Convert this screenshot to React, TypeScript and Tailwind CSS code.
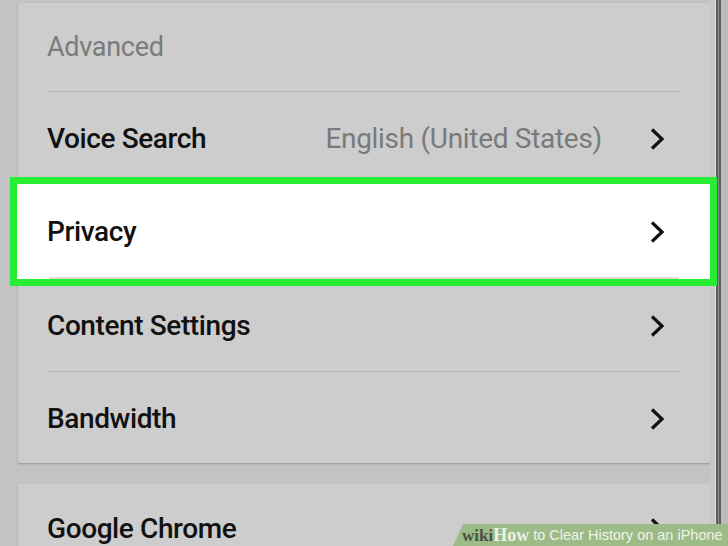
import React from "react";

const Chevron = () => (
  <svg width="18" height="22" viewBox="0 0 18 22" className="shrink-0">
    <polyline points="3,1.5 13,11 3,20.5" fill="none" stroke="#111" strokeWidth="3.2" strokeLinejoin="miter" />
  </svg>
);

const Divider = ({ light }: { light?: boolean }) => (
  <div className={light ? "mx-[31px] h-[2px] bg-[#dcdcdc]" : "mx-[31px] h-px bg-[#b4b4b4]"} />
);

const Row = ({ label, value, h = "h-[92px]" }: { label: string; value?: string; h?: string }) => (
  <div className={`${h} flex items-center pl-[29px] pr-[43px] pt-[2px]`}>
    <span className="text-[28px] font-medium text-[#111] tracking-[-0.4px]">{label}</span>
    <span className="flex-1" />
    {value && <span className="text-[28px] text-[#7a7a7a] mr-[47px] tracking-[-0.3px]">{value}</span>}
    <Chevron />
  </div>
);

export default function App() {
  return (
    <div
      className="w-[728px] h-[546px] bg-[#c3c3c3] relative overflow-hidden flex"
      style={{ fontFamily: "Roboto, 'Liberation Sans', sans-serif" }}
    >
      <div className="w-[18px] shrink-0" />
      <div className="w-[692px] shrink-0 flex flex-col">
        <div className="mt-[3px] bg-[#cdcdcd] rounded-[2px] shadow-[0_1px_2px_rgba(0,0,0,0.25)] flex flex-col">
          <div className="h-[88px] flex items-center pl-[29px]">
            <span className="text-[27px] text-[#7b7b7b] tracking-[-0.3px]">Advanced</span>
          </div>
          <Divider />
          <Row label="Voice Search" value="English (United States)" />
          <Divider />
          <div className="relative">
            <div className="absolute left-[-8px] right-[-7px] top-[-8px] bottom-[-7px] border-[7px] border-[#27ee34] bg-white" />
            <div className="relative">
              <Row label="Privacy" />
              <Divider light />
            </div>
          </div>
          <Row label="Content Settings" />
          <Divider />
          <Row label="Bandwidth" h="h-[91px]" />
        </div>
        <div className="mt-[21px] bg-[#cdcdcd] rounded-[2px] shadow-[0_1px_2px_rgba(0,0,0,0.25)] flex flex-col h-[100px]">
          <Row label="Google Chrome" h="h-[88px]" />
        </div>
      </div>
      <div className="flex-1 flex">
        <div className="w-[5px] bg-[#c7c7c7]" />
        <div className="w-px bg-[#dedede]" />
        <div className="w-[2px] bg-[#5e5e5e]" />
        <div className="w-px bg-[#8c8c8c]" />
        <div className="w-[2px] bg-[#5e5e5e]" />
        <div className="flex-1 bg-[#bcbcbc]" />
      </div>
      <div className="absolute right-0 bottom-0 w-[275px] h-[22px] bg-[#9dbb86] [clip-path:polygon(10px_0,100%_0,100%_100%,0_100%)] flex items-center pl-[9px] whitespace-nowrap">
        <span className="text-[17px] font-bold text-[#4b5147] leading-none" style={{ fontFamily: "'Liberation Serif', serif" }}>wiki</span>
        <span className="text-[18px] font-bold text-[#eef3ea] leading-none" style={{ fontFamily: "'Liberation Serif', serif" }}>How</span>
        <span className="text-[14.5px] text-[#eef3ea] leading-none ml-[4px]" style={{ fontFamily: "'Liberation Sans', sans-serif" }}>to Clear History on an iPhone</span>
      </div>
    </div>
  );
}
